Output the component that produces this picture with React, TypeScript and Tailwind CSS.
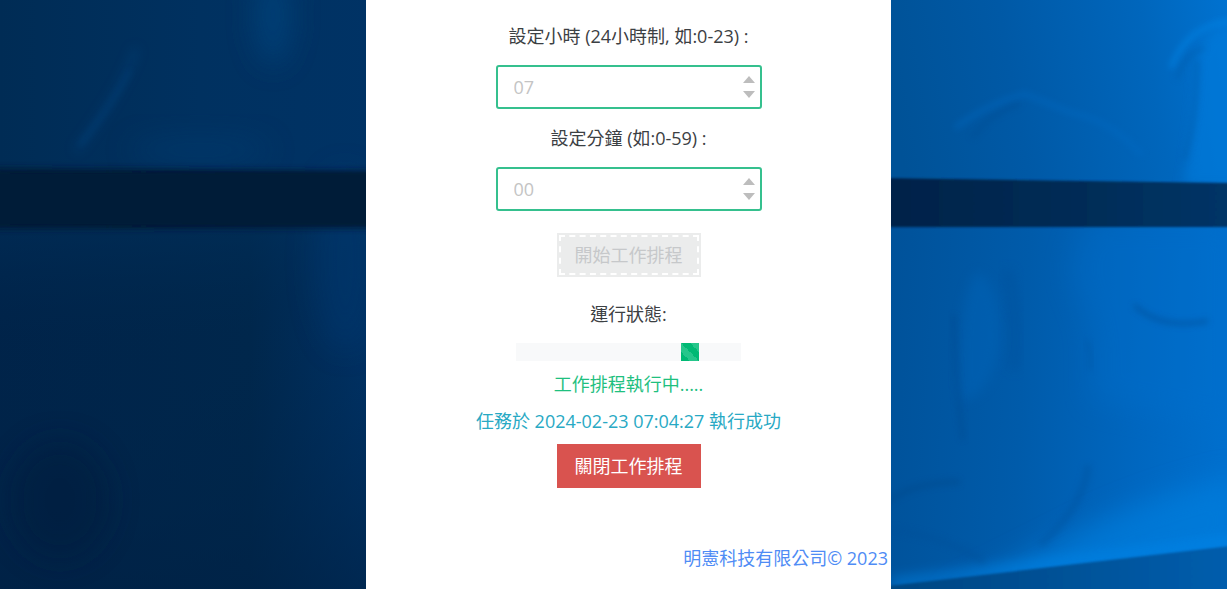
import { useState } from "react";

function Wallpaper() {
  return (
    <svg
      aria-hidden="true"
      className="absolute inset-0 h-full w-full"
      viewBox="0 0 1227 589"
      preserveAspectRatio="none"
    >
      <defs>
        <linearGradient id="leftTop" x1="0" y1="0" x2="1" y2="0">
          <stop offset="0" stopColor="#002c55" />
          <stop offset="0.4" stopColor="#003160" />
          <stop offset="1" stopColor="#003469" />
        </linearGradient>
        <linearGradient id="leftLow" x1="0" y1="0" x2="1" y2="0">
          <stop offset="0" stopColor="#002349" />
          <stop offset="0.5" stopColor="#00274c" />
          <stop offset="0.75" stopColor="#003368" />
        </linearGradient>
        <linearGradient id="leftFade" x1="0" y1="0" x2="0" y2="1">
          <stop offset="0" stopColor="#003463" stopOpacity="0.55" />
          <stop offset="0.35" stopColor="#00274c" stopOpacity="0.1" />
          <stop offset="1" stopColor="#002144" stopOpacity="0.6" />
        </linearGradient>
        <linearGradient id="rightTop" gradientUnits="userSpaceOnUse" x1="885" y1="60" x2="1227" y2="0">
          <stop offset="0" stopColor="#005297" />
          <stop offset="0.35" stopColor="#0059a6" />
          <stop offset="0.75" stopColor="#0066bc" />
          <stop offset="1" stopColor="#0072d0" />
        </linearGradient>
        <linearGradient id="rightLow" gradientUnits="userSpaceOnUse" x1="885" y1="380" x2="1227" y2="400">
          <stop offset="0" stopColor="#00529a" />
          <stop offset="0.4" stopColor="#005baa" />
          <stop offset="0.75" stopColor="#0067c0" />
          <stop offset="1" stopColor="#006fcd" />
        </linearGradient>
        <linearGradient id="rightBand" x1="0" y1="0" x2="1" y2="0">
          <stop offset="0" stopColor="#002148" />
          <stop offset="0.5" stopColor="#002b54" />
          <stop offset="1" stopColor="#003568" />
        </linearGradient>
        <linearGradient id="wedge" x1="0" y1="0" x2="1" y2="0">
          <stop offset="0" stopColor="#004580" />
          <stop offset="1" stopColor="#005eae" />
        </linearGradient>
        <filter id="soft1" x="-20%" y="-20%" width="140%" height="140%">
          <feGaussianBlur stdDeviation="1.2" />
        </filter>
        <filter id="soft3" x="-60%" y="-60%" width="220%" height="220%">
          <feGaussianBlur stdDeviation="3" />
        </filter>
        <filter id="soft6" x="-100%" y="-100%" width="300%" height="300%">
          <feGaussianBlur stdDeviation="6" />
        </filter>
        <filter id="soft12" x="-100%" y="-100%" width="300%" height="300%">
          <feGaussianBlur stdDeviation="14" />
        </filter>
        <clipPath id="rightClip">
          <rect x="880" y="0" width="347" height="589" />
        </clipPath>
      </defs>

      <rect width="500" height="200" fill="url(#leftTop)" />
      <rect x="0" y="200" width="500" height="389" fill="url(#leftLow)" />
      <rect x="0" y="200" width="500" height="389" fill="url(#leftFade)" />
      <ellipse cx="273" cy="15" rx="18" ry="50" fill="#00427a" opacity="0.8" filter="url(#soft12)" />
      <path d="M136 48Q126 85 76 151" fill="none" stroke="#004682" strokeWidth="6" opacity="0.45" filter="url(#soft6)" />
      <path d="M130 70Q112 105 80 145" fill="none" stroke="#004480" strokeWidth="4" opacity="0.4" filter="url(#soft3)" />
      <ellipse cx="200" cy="150" rx="70" ry="12" fill="#003d72" opacity="0.5" filter="url(#soft12)" />
      <ellipse cx="345" cy="260" rx="30" ry="90" fill="#003870" opacity="0.5" filter="url(#soft12)" />
      <ellipse cx="60" cy="500" rx="50" ry="60" fill="#001c3e" opacity="0.5" filter="url(#soft12)" />
      <path d="M-10 168L380 171V228L-10 229Z" fill="#001b39" filter="url(#soft3)" />
      <path d="M-10 172L380 173V225L-10 226Z" fill="#001a37" filter="url(#soft1)" />

      <g clipPath="url(#rightClip)">
        <rect x="880" width="347" height="205" fill="url(#rightTop)" />
        <rect x="880" y="205" width="347" height="384" fill="url(#rightLow)" />
        <path d="M1198 55Q1210 20 1240 25V185H1184Q1196 110 1198 55Z" fill="#007bdd" opacity="0.6" filter="url(#soft6)" />
        <path d="M1171 68Q1188 24 1232 21" fill="none" stroke="#0089ec" strokeWidth="6" opacity="0.45" filter="url(#soft3)" />
        <path d="M1177 79Q1184 54 1204 48M1197 60Q1197 120 1184 160" fill="none" stroke="#005aa8" strokeWidth="4" opacity="0.5" filter="url(#soft3)" />
        <path d="M955 128Q985 105 1025 94L1072 113Q1110 120 1142 155" fill="none" stroke="#006cc6" strokeWidth="6" opacity="0.35" filter="url(#soft3)" />
        <path d="M972 138Q990 113 1020 104" fill="none" stroke="#004c90" strokeWidth="5" opacity="0.4" filter="url(#soft3)" />
        <path d="M1090 220Q1062 260 1077 295Q1100 330 1090 400L1240 430V220Z" fill="#0070ce" opacity="0.35" filter="url(#soft12)" />
        <path d="M961 400Q957 290 978 272Q1000 285 1001 340Q990 400 961 400Z" fill="#0066bc" opacity="0.4" filter="url(#soft6)" />
        <path d="M954 315Q955 380 963 440" fill="none" stroke="#00478b" strokeWidth="4" opacity="0.45" filter="url(#soft3)" />
        <path d="M1007 270Q1018 310 1014 370" fill="none" stroke="#004e98" strokeWidth="9" opacity="0.45" filter="url(#soft6)" />
        <path d="M1134 305Q1160 330 1208 321" fill="none" stroke="#004f99" strokeWidth="4" opacity="0.65" filter="url(#soft3)" />
        <path d="M1086 340Q1092 352 1090 370" fill="none" stroke="#0056a3" strokeWidth="5" opacity="0.4" filter="url(#soft3)" />
        <path d="M940 600L1240 556V475Q1150 495 1080 530Z" fill="#0080e0" opacity="0.65" filter="url(#soft12)" />
        <path d="M891 584L1240 541" fill="none" stroke="#008cf2" strokeWidth="14" opacity="0.4" filter="url(#soft6)" />
        <path d="M1088 465Q1085 505 1040 545" fill="none" stroke="#00539f" strokeWidth="7" opacity="0.45" filter="url(#soft3)" />
        <path d="M885 504Q910 482 960 482" fill="none" stroke="#004788" strokeWidth="6" opacity="0.4" filter="url(#soft3)" />
        <path d="M891 530Q940 535 985 562" fill="none" stroke="#004f99" strokeWidth="6" opacity="0.4" filter="url(#soft3)" />
        <path d="M880 587L1240 545V600H880Z" fill="url(#wedge)" filter="url(#soft1)" />
        <path d="M870 178L1240 183V227L870 227Z" fill="url(#rightBand)" filter="url(#soft1)" />
      </g>
    </svg>
  );
}

type TimeFieldProps = {
  id: string;
  label: string;
  placeholder: string;
  max: number;
};

function TimeField({ id, label, placeholder, max }: TimeFieldProps) {
  const [value, setValue] = useState("");
  const step = (delta: number) => {
    const current = Number(value || placeholder);
    const next = Math.min(max, Math.max(0, current + delta));
    setValue(String(next).padStart(2, "0"));
  };

  return (
    <div className="flex flex-col items-center gap-4">
      <label htmlFor={id} className="text-[#3c4043]">
        {label}
      </label>
      <div className="flex h-11 w-[266px] items-center rounded-[3px] border-2 border-[#35c08e] bg-white pr-[5px] pl-4">
        <input
          id={id}
          type="text"
          inputMode="numeric"
          value={value}
          placeholder={placeholder}
          onChange={(e) => setValue(e.target.value)}
          className="min-w-0 flex-1 bg-transparent text-[#c4c4c4] outline-none placeholder:text-[#c4c4c4]"
        />
        <div className="flex flex-col gap-2">
          <button type="button" aria-label="增加" onClick={() => step(1)}>
            <svg width="12" height="7" viewBox="0 0 12 7" className="block">
              <path d="M6 0L12 7H0Z" fill="#bdbdbd" />
            </svg>
          </button>
          <button type="button" aria-label="減少" onClick={() => step(-1)}>
            <svg width="12" height="7" viewBox="0 0 12 7" className="block">
              <path d="M0 0H12L6 7Z" fill="#bdbdbd" />
            </svg>
          </button>
        </div>
      </div>
    </div>
  );
}

export default function App() {
  return (
    <div className="relative flex min-h-screen justify-center bg-[#002c55] font-['Open_Sans','Noto_Sans_CJK_TC',sans-serif] text-[18px] leading-[26px]">
      <Wallpaper />
      <main className="relative ml-[30px] flex w-full max-w-[525px] flex-col items-center bg-white pt-[23px]">
        <div className="flex flex-col gap-4">
          <TimeField id="hour" label="設定小時 (24小時制, 如:0-23) :" placeholder="07" max={23} />
          <TimeField id="minute" label="設定分鐘 (如:0-59) :" placeholder="00" max={59} />
        </div>
        <button
          type="button"
          disabled
          className="mt-[22px] h-11 w-36 bg-[#ebecec] text-[#c6c8ca] outline-2 -outline-offset-4 outline-white outline-dashed"
        >
          開始工作排程
        </button>
        <p className="mt-6 text-[#3c4043]">運行狀態:</p>
        <div role="progressbar" aria-label="運行狀態" className="mt-4 flex h-[18px] w-[225px] bg-[#f8f9fa]">
          <div className="ml-[165px] w-[18px] bg-[linear-gradient(45deg,#00b974_25%,#26c68b_25%,#26c68b_50%,#00b974_50%,#00b974_75%,#26c68b_75%)]" />
        </div>
        <p className="mt-[10px] text-[#1fc07f]">工作排程執行中.....</p>
        <p className="mt-[11px] text-[#28a9c4]">任務於 2024-02-23 07:04:27 執行成功</p>
        <button type="button" className="mt-[10px] h-11 w-36 bg-[#d9534f] text-white">
          關閉工作排程
        </button>
        <footer className="mt-[57px] self-end pr-[3px] pb-4 text-[#4f8cf5]">明憲科技有限公司© 2023</footer>
      </main>
    </div>
  );
}
